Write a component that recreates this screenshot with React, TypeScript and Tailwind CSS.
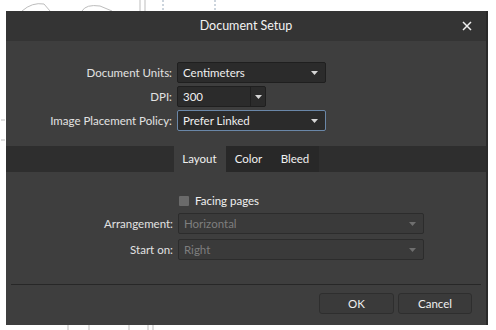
import React from "react";

const font = { fontFamily: 'Lato, "Noto Sans", sans-serif' };

function Caret({ dim }: { dim?: boolean }) {
  return (
    <svg width="7" height="4" viewBox="0 0 7 4" className="shrink-0">
      <path d="M0 0h7L3.5 4z" fill={dim ? "#6f6f6f" : "#d6d6d6"} />
    </svg>
  );
}

function Select({ value, width, focus, dim }: { value: string; width: string; focus?: boolean; dim?: boolean }) {
  return (
    <div
      className={`${width} h-[21px] flex items-center justify-between pl-[5px] pr-[7px] rounded-[2px] border ${
        focus ? "border-[#6a87a8] bg-[#2b2b2b]" : dim ? "border-[#2c2c2c] bg-[#3a3a3a]" : "border-[#1f1f1f] bg-[#2b2b2b]"
      }`}
    >
      <span className={dim ? "text-[#7e7e7e]" : "text-[#f0f0f0]"}>{value}</span>
      <Caret dim={dim} />
    </div>
  );
}

function Row({ label, children, labelW }: { label: string; children: React.ReactNode; labelW: string }) {
  return (
    <div className="flex items-center">
      <div className={`${labelW} text-right text-[#e2e2e2] pr-[5px]`}>{label}</div>
      {children}
    </div>
  );
}

// faint drawing on the canvas behind the dialog
function Sketch() {
  return (
    <svg width="496" height="330" className="absolute inset-0" fill="none" stroke="#bdbdbd" strokeWidth="1">
      <path d="M22 11 Q32 2 44 4 L50 11" />
      <path d="M82 11 Q86 4 100 6 L112 11" />
      <path d="M140 0v11M145 0v11" />
      <path d="M163 0v11" strokeDasharray="2 2" stroke="#9ab" />
      <path d="M215 0v11" strokeDasharray="2 2" stroke="#9ab" />
      <path d="M1 120h4M1 140h4" />
      <path d="M68 325v5M89 325v5M129 325v5M148 325v5M153 325v5" />
    </svg>
  );
}

export default function App() {
  return (
    <div className="relative w-[496px] h-[330px] bg-white overflow-hidden pt-[11px] pl-[6px] text-[11.5px] leading-none" style={font}>
      <Sketch />
      <div className="relative w-[482px] h-[314px] flex flex-col bg-[#3e3e3e] border-r-2 border-[#2a2a2a]">
        <div className="h-[30px] bg-[#343434] flex items-center relative">
          <div className="flex-1 text-center text-[12.5px] text-[#f2f2f2]">Document Setup</div>
          <svg width="10" height="10" viewBox="0 0 10 10" className="absolute right-[14px] top-[10px]">
            <path d="M1 1l8 8M9 1l-8 8" stroke="#f0f0f0" strokeWidth="1.5" />
          </svg>
        </div>

        <div className="flex flex-col gap-[3px] pt-[21px]">
          <Row label="Document Units:" labelW="w-[171px]">
            <Select value="Centimeters" width="w-[149px]" />
          </Row>
          <Row label="DPI:" labelW="w-[171px]">
            <div className="w-[89px] h-[21px] flex rounded-[2px] border border-[#1f1f1f] bg-[#2b2b2b]">
              <div className="flex-1 flex items-center pl-[5px] text-[#f0f0f0] border-r border-[#1f1f1f]">300</div>
              <div className="w-[14px] flex items-center justify-center">
                <Caret />
              </div>
            </div>
          </Row>
          <Row label="Image Placement Policy:" labelW="w-[171px]">
            <Select value="Prefer Linked" width="w-[149px]" focus />
          </Row>
        </div>

        <div className="mt-[15px] h-[26px] bg-[#2e2e2e] flex justify-center">
          <div className="flex">
            <div className="w-[52px] bg-[#3e3e3e] flex items-center justify-center text-[#f0f0f0]">Layout</div>
            <div className="w-[46px] bg-[#282828] flex items-center justify-center text-[#f0f0f0]">Color</div>
            <div className="w-[47px] bg-[#282828] flex items-center justify-center text-[#f0f0f0]">Bleed</div>
          </div>
        </div>

        <div className="flex flex-col pt-[24px]">
          <div className="flex items-center h-[10px] pl-[173px]">
            <div className="w-[10px] h-[10px] rounded-[1px] bg-[#6a6a6a]" />
            <span className="ml-[6px] text-[#f0f0f0]">Facing pages</span>
          </div>
          <div className="flex flex-col gap-[5px] mt-[7px]">
            <Row label="Arrangement:" labelW="w-[172px]">
              <Select value="Horizontal" width="w-[246px]" dim />
            </Row>
            <Row label="Start on:" labelW="w-[172px]">
              <Select value="Right" width="w-[246px]" dim />
            </Row>
          </div>
        </div>

        <div className="mt-[24px] mx-[5px] border-t border-[#272727]" />

        <div className="flex justify-end gap-[4px] pr-[14px] pt-[8px]">
          <div className="w-[75px] h-[21px] rounded-[3px] border border-[#2e2e2e] bg-[#3a3a3a] flex items-center justify-center text-[#f0f0f0]">OK</div>
          <div className="w-[74px] h-[21px] rounded-[3px] border border-[#2e2e2e] bg-[#3a3a3a] flex items-center justify-center text-[#f0f0f0]">Cancel</div>
        </div>
      </div>
    </div>
  );
}
